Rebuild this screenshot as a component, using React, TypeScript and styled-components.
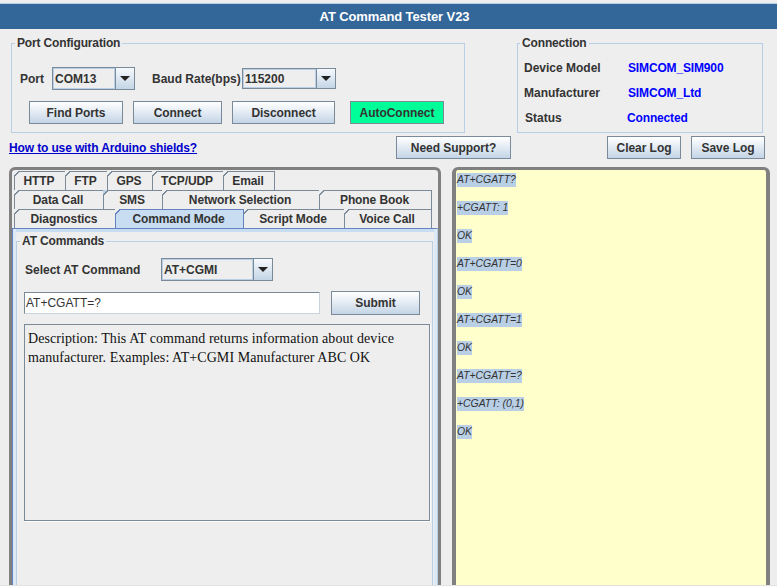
import React from 'react';
import styled, { createGlobalStyle } from 'styled-components';

const GlobalStyle = createGlobalStyle`
  html, body {
    margin: 0;
    padding: 0;
    overflow: hidden;
    background: #eeeeee;
  }
`;

const Frame = styled.div`
  width: 777px;
  height: 586px;
  overflow: hidden;
  box-sizing: border-box;
  background: #eeeeee;
  border-bottom: 1px solid #e2e2e2;
  font-family: "Liberation Sans", Arial, sans-serif;
  font-size: 12px;
  font-weight: 700;
  color: #333333;
  padding-top: 3px;
`;

const TitleBar = styled.div`
  height: 26px;
  border-top: 1px solid #b8cfe5;
  box-sizing: border-box;
  background: #336699;
  color: #ffffff;
  font-size: 13px;
  letter-spacing: -0.1px;
  padding-left: 12px;
  display: flex;
  align-items: center;
  justify-content: center;
`;

const TopRow = styled.div`
  display: flex;
  gap: 52px;
  padding: 7px 0 0 11px;
`;

const Group = styled.fieldset<{ $width: number; $height: number }>`
  width: ${p => p.$width}px;
  height: ${p => p.$height}px;
  box-sizing: border-box;
  margin: 0;
  padding: 0;
  min-width: 0;
  border: 1px solid #b8cfe5;
  flex: none;
`;

const GroupTitle = styled.legend<{ $inset?: number }>`
  margin-left: ${p => p.$inset ?? 3}px;
  padding: 0 2px;
  font-size: 12px;
  line-height: 14px;
  font-weight: 700;
  letter-spacing: -0.15px;
`;

const PortGrid = styled.div`
  display: flex;
  flex-direction: column;
  gap: 11px;
  padding: 17px 0 0 8px;
`;

const PortRow = styled.div`
  display: flex;
  align-items: center;
  height: 23px;
`;

const Label = styled.span<{ $width?: number; $gap?: number }>`
  flex: none;
  width: ${p => (p.$width ? `${p.$width}px` : 'auto')};
  margin-left: ${p => p.$gap ?? 0}px;
  white-space: nowrap;
`;

const Combo = styled.div<{ $width: number; $height?: number }>`
  flex: none;
  display: flex;
  box-sizing: border-box;
  width: ${p => p.$width}px;
  height: ${p => p.$height ?? 23}px;
  border: 1px solid #7a8a99;
`;

const ComboValue = styled.div`
  flex: 1;
  display: flex;
  align-items: center;
  padding-left: 1px;
  border: 1px solid #b8cfe5;
  background: #eeeeee;
`;

const ComboArrow = styled.div`
  flex: none;
  width: 18px;
  display: flex;
  align-items: center;
  justify-content: center;
  border-left: 1px solid #7a8a99;
  background: linear-gradient(#f6f9fc, #c4d5e6);

  &::after {
    content: '';
    width: 0;
    height: 0;
    border-left: 5px solid transparent;
    border-right: 5px solid transparent;
    border-top: 5px solid #222222;
  }
`;

const Button = styled.button<{ $width: number; $height?: number; $lit?: boolean; $gap?: number }>`
  flex: none;
  width: ${p => p.$width}px;
  height: ${p => p.$height ?? 23}px;
  box-sizing: border-box;
  margin: 0 0 0 ${p => p.$gap ?? 0}px;
  padding: 0;
  border: 1px solid #7a8a99;
  background: ${p => (p.$lit ? '#00ff99' : 'linear-gradient(#ffffff, #f1f5f9 25%, #c4d5e6)')};
  font-family: inherit;
  font-size: 12px;
  font-weight: 700;
  letter-spacing: -0.05px;
  color: #333333;
`;

const ButtonRow = styled.div`
  display: flex;
  gap: 10px;
  padding-left: 9px;
`;

const Info = styled.div`
  display: flex;
  flex-direction: column;
  gap: 11px;
  padding: 11px 0 0 6px;
`;

const InfoRow = styled.div<{ $nudge?: number }>`
  display: flex;
  height: 14px;
  line-height: 14px;
  margin-left: ${p => p.$nudge ?? 0}px;
`;

const InfoValue = styled.span`
  color: #0000ff;
  letter-spacing: -0.15px;
`;

const ActionRow = styled.div`
  display: flex;
  align-items: center;
  height: 23px;
  margin-top: 3px;
  padding-left: 9px;
`;

const HelpLink = styled.a`
  width: 387px;
  flex: none;
  color: #0000cc;
  text-decoration: underline;
  letter-spacing: -0.13px;
`;

const LogActions = styled.div`
  display: flex;
  gap: 10px;
  margin-left: 96px;
`;

const Workspace = styled.div`
  display: flex;
  gap: 11px;
  margin-top: 8px;
  padding-left: 9px;
`;

const LeftPane = styled.div`
  width: 432px;
  height: 430px;
  box-sizing: border-box;
  flex: none;
  border: 3px solid #808080;
  border-bottom: 0;
  border-radius: 6px 6px 0 0;
  padding-top: 1px;
  background: #eeeeee;
`;

const TabRow = styled.div`
  display: flex;
  height: 19px;
  padding-left: 2px;
`;

const Tab = styled.div<{ $width: number; $active?: boolean; $notch?: boolean }>`
  position: relative;
  flex: none;
  width: ${p => p.$width}px;
  box-sizing: border-box;
  display: flex;
  align-items: center;
  justify-content: center;
  padding-right: 2px;
  border: 1px solid ${p => (p.$active ? '#6382bf' : '#7a8a99')};
  border-bottom: 0;
  margin-right: -1px;
  letter-spacing: -0.1px;
  z-index: ${p => (p.$active ? 1 : 0)};
  background: ${p => (p.$active ? '#c8ddf2' : '#eeeeee')};

  &::before {
    content: '';
    position: absolute;
    left: -1px;
    top: -1px;
    width: 6px;
    height: 6px;
    background: linear-gradient(
      135deg,
      ${p => (p.$notch ? '#b8cfe5' : '#eeeeee')} 3.4px,
      ${p => (p.$active ? '#6382bf' : '#7a8a99')} 3.4px,
      ${p => (p.$active ? '#6382bf' : '#7a8a99')} 4.4px,
      transparent 4.4px
    );
  }
`;

const TabBody = styled.div`
  height: 380px;
  box-sizing: border-box;
  border: 1px solid #6382bf;
  border-bottom: 0;
  border-right-color: #b8cfe5;
  box-shadow: inset 3px 0 0 #dde9f5, inset -3px 0 0 #dde9f5;
  background: linear-gradient(#c8ddf2 3px, #eeeeee 3px);
  padding: 5px 3px 0 3px;
`;

const CommandGroup = styled(Group)`
  border-bottom: 0;
`;

const SelectRow = styled.div`
  display: flex;
  align-items: center;
  padding: 10px 0 0 8px;
`;

const EntryRow = styled.div`
  display: flex;
  align-items: center;
  gap: 11px;
  padding: 10px 0 0 7px;
`;

const CommandInput = styled.div`
  flex: none;
  width: 296px;
  height: 22px;
  box-sizing: border-box;
  display: flex;
  align-items: center;
  padding-left: 1px;
  border: 1px solid #7a8a99;
  border-right-color: #c8d4e0;
  border-bottom-color: #c8d4e0;
  background: #ffffff;
  font-weight: 400;
`;

const Description = styled.div`
  width: 406px;
  height: 197px;
  box-sizing: border-box;
  margin: 9px 0 0 7px;
  padding: 4px 3px;
  border: 1px solid #7a8a99;
  box-shadow: 1px 1px 0 #ffffff;
  font-family: "Liberation Serif", "Times New Roman", serif;
  font-size: 14px;
  line-height: 19px;
  letter-spacing: 0.06px;
  font-weight: 400;
  color: #111111;
`;

const LogPane = styled.div`
  width: 318px;
  height: 430px;
  box-sizing: border-box;
  flex: none;
  border: 4px solid #808080;
  border-top-width: 3px;
  border-bottom: 0;
  border-radius: 6px 6px 0 0;
  background: #ffffcc;
  padding: 2px 0 0 1px;
`;

const LogLine = styled.div`
  height: 28px;
`;

const LogText = styled.span`
  display: inline-block;
  height: 14px;
  line-height: 14px;
  background: #b8cfe5;
  font-size: 10.4px;
  font-style: italic;
  font-weight: 400;
  color: #333333;
`;

const tabRows = [
  [
    { label: 'HTTP', width: 52 },
    { label: 'FTP', width: 43 },
    { label: 'GPS', width: 46 },
    { label: 'TCP/UDP', width: 72 },
    { label: 'Email', width: 52 },
  ],
  [
    { label: 'Data Call', width: 90 },
    { label: 'SMS', width: 60, notch: true },
    { label: 'Network Selection', width: 158 },
    { label: 'Phone Book', width: 113 },
  ],
  [
    { label: 'Diagnostics', width: 102 },
    { label: 'Command Mode', width: 129, active: true },
    { label: 'Script Mode', width: 102 },
    { label: 'Voice Call', width: 88 },
  ],
];

const logLines = [
  'AT+CGATT?',
  '+CGATT: 1',
  'OK',
  'AT+CGATT=0',
  'OK',
  'AT+CGATT=1',
  'OK',
  'AT+CGATT=?',
  '+CGATT: (0,1)',
  'OK',
];

const App: React.FC = () => (
  <Frame>
    <GlobalStyle />
    <TitleBar>AT Command Tester V23</TitleBar>

    <TopRow>
      <Group $width={454} $height={97}>
        <GroupTitle>Port Configuration</GroupTitle>
        <PortGrid>
          <PortRow>
            <Label $width={32}>Port</Label>
            <Combo $width={83}>
              <ComboValue>COM13</ComboValue>
              <ComboArrow />
            </Combo>
            <Label $width={90} $gap={17}>Baud Rate(bps)</Label>
            <Combo $width={94} $height={21}>
              <ComboValue>115200</ComboValue>
              <ComboArrow />
            </Combo>
          </PortRow>
          <ButtonRow>
            <Button $width={94}>Find Ports</Button>
            <Button $width={89}>Connect</Button>
            <Button $width={103}>Disconnect</Button>
            <Button $width={94} $lit $gap={5}>AutoConnect</Button>
          </ButtonRow>
        </PortGrid>
      </Group>

      <Group $width={246} $height={97}>
        <GroupTitle $inset={2}>Connection</GroupTitle>
        <Info>
          <InfoRow>
            <Label $width={104}>Device Model</Label>
            <InfoValue>SIMCOM_SIM900</InfoValue>
          </InfoRow>
          <InfoRow>
            <Label $width={104}>Manufacturer</Label>
            <InfoValue>SIMCOM_Ltd</InfoValue>
          </InfoRow>
          <InfoRow $nudge={1}>
            <Label $width={102}>Status</Label>
            <InfoValue>Connected</InfoValue>
          </InfoRow>
        </Info>
      </Group>
    </TopRow>

    <ActionRow>
      <HelpLink>How to use with Arduino shields?</HelpLink>
      <Button $width={115}>Need Support?</Button>
      <LogActions>
        <Button $width={74}>Clear Log</Button>
        <Button $width={74}>Save Log</Button>
      </LogActions>
    </ActionRow>

    <Workspace>
      <LeftPane>
        {tabRows.map((row, i) => (
          <TabRow key={i}>
            {row.map(tab => (
              <Tab
                key={tab.label}
                $width={tab.width}
                $active={'active' in tab}
                $notch={'notch' in tab}
              >
                {tab.label}
              </Tab>
            ))}
          </TabRow>
        ))}
        <TabBody>
          <CommandGroup $width={417} $height={370}>
            <GroupTitle>AT Commands</GroupTitle>
            <SelectRow>
              <Label $width={136}>Select AT Command</Label>
              <Combo $width={112}>
                <ComboValue>AT+CGMI</ComboValue>
                <ComboArrow />
              </Combo>
            </SelectRow>
            <EntryRow>
              <CommandInput>AT+CGATT=?</CommandInput>
              <Button $width={89} $height={24}>Submit</Button>
            </EntryRow>
            <Description>
              Description: This AT command returns information about device manufacturer. Examples: AT+CGMI Manufacturer ABC OK
            </Description>
          </CommandGroup>
        </TabBody>
      </LeftPane>

      <LogPane>
        {logLines.map((line, i) => (
          <LogLine key={i}>
            <LogText>{line}</LogText>
          </LogLine>
        ))}
      </LogPane>
    </Workspace>
  </Frame>
);

export default App;
